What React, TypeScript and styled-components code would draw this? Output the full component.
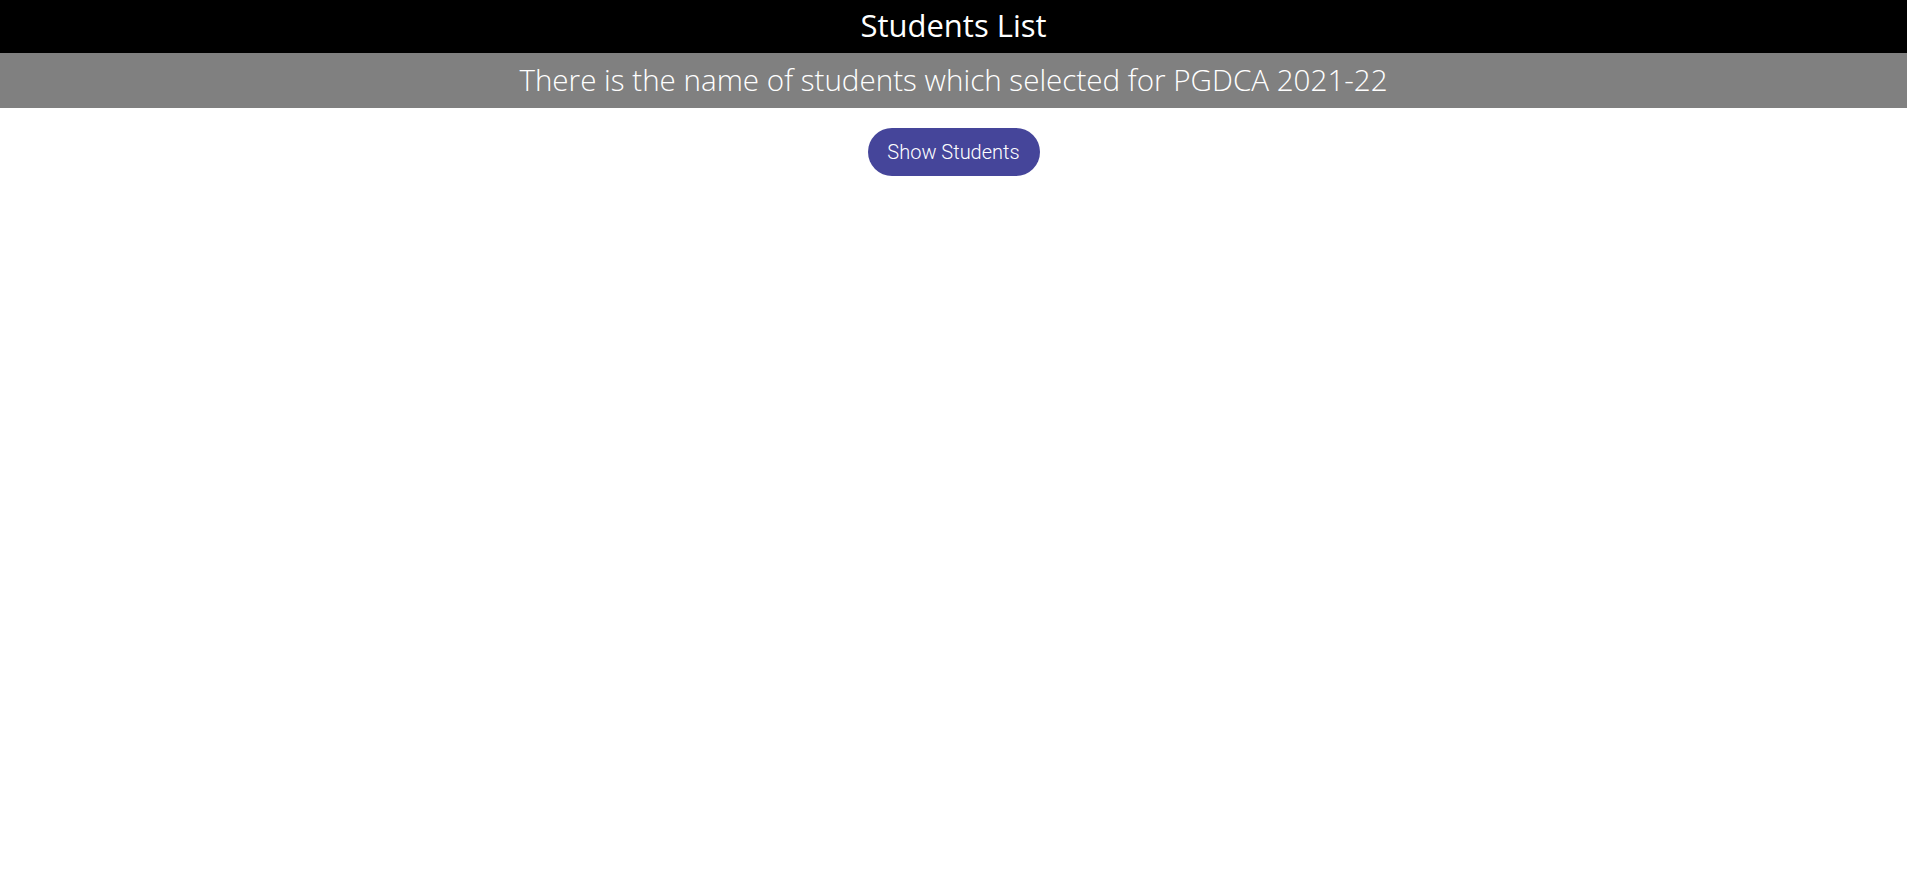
import React from "react";
import styled, { createGlobalStyle } from "styled-components";

const GlobalStyle = createGlobalStyle`
  html, body { margin: 0; padding: 0; background: #ffffff; }
  body { font-family: "Open Sans", "Noto Sans", sans-serif; }
  * { box-sizing: border-box; }
`;

const Page = styled.div`
  display: flex;
  flex-direction: column;
  align-items: stretch;
`;

const TitleBar = styled.h1`
  margin: 0;
  height: 53px;
  padding-bottom: 4px;
  background: #000000;
  color: #ffffff;
  display: flex;
  align-items: center;
  justify-content: center;
  font-family: "Open Sans", sans-serif;
  font-weight: 500;
  font-size: 31px;
`;

const SubtitleBar = styled.h2`
  margin: 0;
  height: 55px;
  padding-bottom: 2px;
  background: #808080;
  color: #ffffff;
  display: flex;
  align-items: center;
  justify-content: center;
  font-family: "Open Sans", sans-serif;
  font-weight: 300;
  font-size: 29.6px;
`;

const Actions = styled.div`
  display: flex;
  justify-content: center;
  padding-top: 20px;
`;

const PillButton = styled.button`
  height: 48px;
  width: 172px;
  border: none;
  border-radius: 24px;
  background: #45459a;
  color: #ffffff;
  font-family: Roboto, sans-serif;
  font-weight: 300;
  font-size: 20px;
  cursor: pointer;
  padding: 0;
`;

export default function App() {
  return (
    <Page>
      <GlobalStyle />
      <TitleBar>Students List</TitleBar>
      <SubtitleBar>There is the name of students which selected for PGDCA 2021-22</SubtitleBar>
      <Actions>
        <PillButton>Show Students</PillButton>
      </Actions>
    </Page>
  );
}
